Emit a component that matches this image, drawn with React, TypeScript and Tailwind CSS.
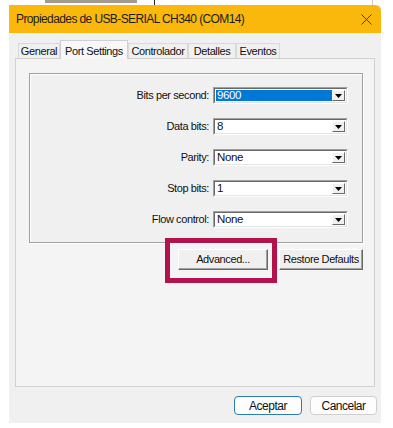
import React from 'react';

const FONT = "font-['Liberation_Sans',Arial,sans-serif]";

type Row = { label: string; value: string; selected?: boolean };

const ROWS: Row[] = [
  { label: 'Bits per second:', value: '9600', selected: true },
  { label: 'Data bits:', value: '8' },
  { label: 'Parity:', value: 'None' },
  { label: 'Stop bits:', value: '1' },
  { label: 'Flow control:', value: 'None' }
];

const TABS = [
  { label: 'General', w: 'w-[42px]' },
  { label: 'Port Settings', w: 'w-[68px]', active: true },
  { label: 'Controlador', w: 'w-[60px]' },
  { label: 'Detalles', w: 'w-[48px]' },
  { label: 'Eventos', w: 'w-[44px]' }
];

function Combo({ value, selected }: { value: string; selected?: boolean }) {
  return (
    <div className="flex h-[17px] w-[135px] border border-t-[#a0a0a0] border-l-[#a0a0a0] border-b-white border-r-white">
      <div className="flex flex-1 border border-t-[#696969] border-l-[#696969] border-b-[#e3e3e3] border-r-[#e3e3e3] bg-white p-px">
        <div
          className={`flex flex-1 items-center pl-px text-[11.5px] leading-none tracking-[-0.4px] ${
            selected ? 'bg-[#0078d7] text-white' : 'text-[#111]'
          }`}
        >
          {value}
        </div>
        <div className="flex w-[13px] items-center justify-center border border-t-white border-l-white border-b-[#696969] border-r-[#696969] bg-[#f0f0f0]">
          <svg width="7" height="4" viewBox="0 0 7 4">
            <path d="M0 0h7L3.5 4z" fill="#000" />
          </svg>
        </div>
      </div>
    </div>
  );
}

function ClassicButton({ children, w }: { children: React.ReactNode; w: string }) {
  return (
    <div
      className={`flex h-[21px] ${w} items-center justify-center whitespace-nowrap border border-t-white border-l-white border-b-[#696969] border-r-[#696969] bg-[#f0f0f0] text-[11px] tracking-[-0.4px] text-[#111] shadow-[inset_-1px_-1px_0_#a0a0a0]`}
    >
      {children}
    </div>
  );
}

export default function App() {
  return (
    <div className={`h-[428px] w-[393px] overflow-hidden bg-white ${FONT}`}>
      {/* bit of the window behind */}
      <div className="flex h-[5px] items-start">
        <div className="ml-[45px] h-[3px] w-[92px] bg-[#a39c8c]" />
        <div className="ml-[17px] h-[5px] w-px bg-[#222]" />
        <div className="ml-[217px] h-[5px] w-px bg-[#c8c8c8]" />
      </div>

      <div className="ml-[9px] flex h-[418px] w-[372px] flex-col bg-[#f0f0f0]">
        {/* title bar */}
        <div className="flex h-[28px] items-center justify-between rounded-tr-[6px] bg-[#fbb80c] pl-[7px] pr-[9px]">
          <span className="whitespace-nowrap text-[12px] tracking-[-0.6px] text-[#1b1b1b]">
            Propiedades de USB-SERIAL CH340 (COM14)
          </span>
          <svg width="11" height="11" viewBox="0 0 11 11">
            <path d="M0.5 0.5l10 10M10.5 0.5l-10 10" stroke="#3a3a3a" strokeWidth="1" />
          </svg>
        </div>

        {/* tabs */}
        <div className="mt-[7px] flex h-[18px] items-end pl-[9px]">
          {TABS.map((t) =>
            t.active ? (
              <div
                key={t.label}
                className={`relative z-10 -mb-px flex h-[19px] ${t.w} items-start justify-center whitespace-nowrap border border-b-0 border-[#d0d0d0] bg-[#f8f8f8] pt-[2px] text-[11px] tracking-[-0.4px] text-[#111]`}
              >
                {t.label}
              </div>
            ) : (
              <div
                key={t.label}
                className={`flex h-[15px] ${t.w} items-center justify-center whitespace-nowrap border border-b-0 border-[#d9d9d9] text-[11px] tracking-[-0.4px] text-[#111]`}
              >
                {t.label}
              </div>
            )
          )}
        </div>

        {/* tab page */}
        <div className="relative ml-[6px] h-[329px] w-[360px] border border-[#d0d0d0] bg-[#f4f4f4]">
          <div className="ml-[13px] mt-[14px] flex h-[170px] w-[334px] flex-col gap-[14px] border border-[#a0a0a0] bg-[#f0f0f0] pr-[14px] pt-[13px] shadow-[1px_1px_0_#fff,inset_1px_1px_0_#fff]">
            {ROWS.map((r) => (
              <div key={r.label} className="flex h-[17px] items-center justify-end">
                <span className="mr-[4px] whitespace-nowrap text-[11px] tracking-[-0.4px] text-[#111]">{r.label}</span>
                <Combo value={r.value} selected={r.selected} />
              </div>
            ))}
          </div>

          <div className="mt-[6px] flex justify-end gap-[11px] pr-[11px]">
            <ClassicButton w="w-[90px]">Advanced...</ClassicButton>
            <ClassicButton w="w-[84px]">Restore Defaults</ClassicButton>
          </div>

          {/* highlight annotation */}
          <div className="absolute left-[149px] top-[179px] h-[45px] w-[112px] border-[5px] border-[#b3134c]" />
        </div>

        {/* dialog buttons */}
        <div className="mt-[9px] flex justify-end gap-[8px] pr-[4px]">
          <div className="flex h-[19px] w-[68px] items-center justify-center rounded-[4px] border border-[#2f7bb0] bg-[#fdfdfd] text-[12px] tracking-[-0.5px] text-[#111]">
            Aceptar
          </div>
          <div className="flex h-[19px] w-[67px] items-center justify-center rounded-[4px] border border-[#cfcfcf] bg-[#fdfdfd] text-[12px] tracking-[-0.5px] text-[#111]">
            Cancelar
          </div>
        </div>
      </div>
    </div>
  );
}
